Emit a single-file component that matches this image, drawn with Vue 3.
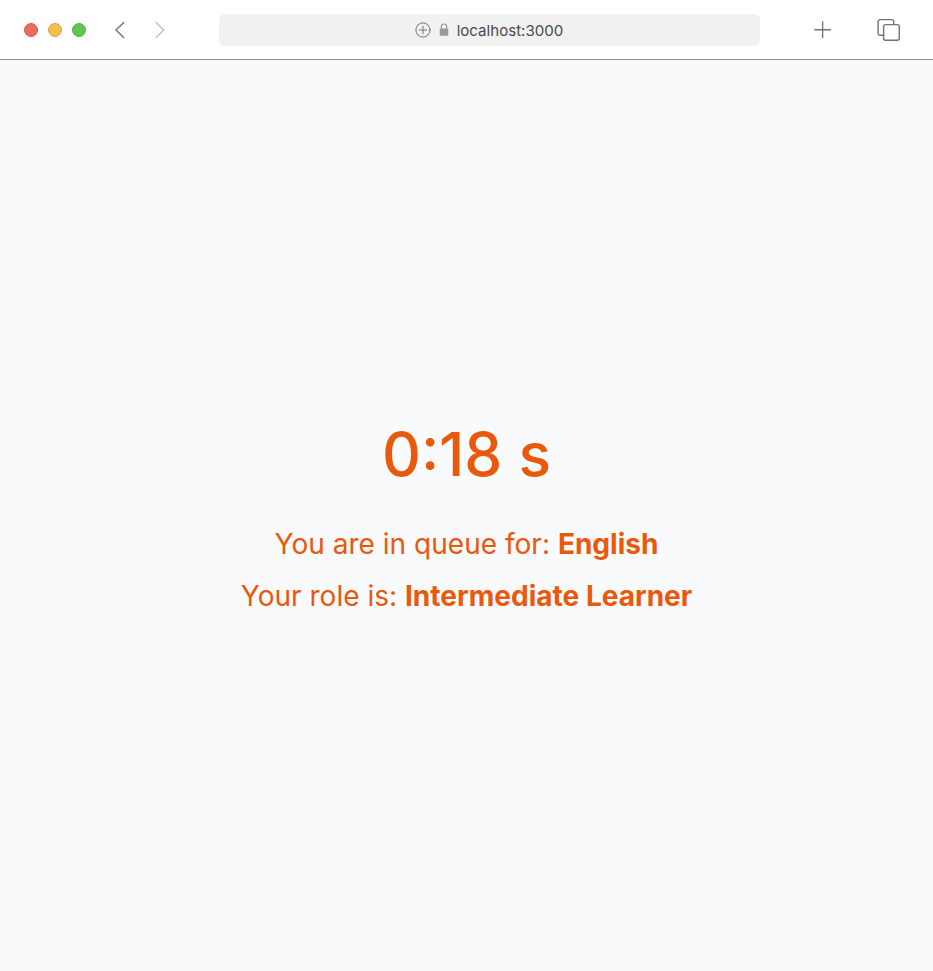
<script setup>
import { ref } from 'vue'

const address = ref('localhost:3000')
const elapsed = ref('0:18 s')
const language = ref('English')
const role = ref('Intermediate Learner')
</script>

<template>
  <div class="window">
    <header class="toolbar">
      <div class="lights">
        <span class="light red"></span>
        <span class="light yellow"></span>
        <span class="light green"></span>
      </div>
      <nav class="history">
        <svg class="chevron" width="12" height="18" viewBox="0 0 12 18"><path d="M9.7 1.4 2 9l7.7 7.6" /></svg>
        <svg class="chevron disabled" width="12" height="18" viewBox="0 0 12 18"><path d="M2 1.4 9.7 9 2 16.6" /></svg>
      </nav>
      <div class="address">
        <svg class="add" width="16" height="16" viewBox="0 0 16 16">
          <circle cx="8" cy="8" r="7.1" />
          <path d="M8 4.3v7.4M4.3 8h7.4" />
        </svg>
        <svg class="lock" width="10" height="13" viewBox="0 0 10 13">
          <path class="shackle" d="M2.4 6V3.6a2.6 2.6 0 0 1 5.2 0V6" />
          <rect x="0.7" y="5.6" width="8.6" height="7.1" rx="1" />
        </svg>
        <span class="url">{{ address }}</span>
      </div>
      <div class="actions">
        <svg width="18" height="18" viewBox="0 0 18 18"><path d="M8.6 1v15.6M.8 8.8h15.6" /></svg>
        <svg width="24" height="24" viewBox="0 0 24 24">
          <path d="M6.6 17.3H3.1a2 2 0 0 1-2-2V3.6a2 2 0 0 1 2-2h11.6a2 2 0 0 1 2 2v3" />
          <rect x="6.6" y="6.6" width="15.7" height="15.6" rx="2" />
        </svg>
      </div>
    </header>
    <main class="page">
      <h1 class="timer">{{ elapsed }}</h1>
      <p class="line">You are in queue for: <strong>{{ language }}</strong></p>
      <p class="line">Your role is: <strong>{{ role }}</strong></p>
    </main>
  </div>
</template>

<style>
body {
  background: #f9fafc;
}
</style>

<style scoped>
.window {
  display: flex;
  flex-direction: column;
  height: 100vh;
  font-family: Inter, "Liberation Sans", sans-serif;
}
.toolbar {
  box-sizing: border-box;
  display: flex;
  align-items: center;
  flex: none;
  height: 60px;
  padding: 0 32px 0 24px;
  background: #fff;
  border-bottom: 1px solid #8f9194;
}
.lights {
  display: flex;
  gap: 10px;
}
.light {
  box-sizing: border-box;
  width: 14px;
  height: 14px;
  border-radius: 50%;
}
.red {
  background: #ed6a5e;
  border: 1px solid #d9594e;
}
.yellow {
  background: #f4be4f;
  border: 1px solid #d9a542;
}
.green {
  background: #61c554;
  border: 1px solid #53ac46;
}
.history {
  display: flex;
  gap: 28px;
  margin-left: 28px;
}
svg {
  display: block;
  flex: none;
  fill: none;
  stroke: #737373;
  stroke-width: 1.4;
  stroke-linecap: round;
}
.disabled {
  stroke: #bfbfbf;
}
.address {
  display: flex;
  align-items: center;
  justify-content: center;
  box-sizing: border-box;
  width: 541px;
  height: 32px;
  margin-left: 53px;
  padding-right: 1px;
  background: #f1f1f1;
  border-radius: 6px;
}
.add {
  stroke-width: 1;
}
.lock {
  margin: 0 8px;
  fill: #999;
  stroke: none;
}
.shackle {
  fill: none;
  stroke: #999;
  stroke-width: 1.2;
}
.url {
  padding-top: 2px;
  color: #4a4a4a;
  font-size: 15.1px;
  line-height: 20px;
}
.actions {
  display: flex;
  align-items: center;
  gap: 45px;
  margin-left: auto;
}
.page {
  display: flex;
  flex: 1;
  flex-direction: column;
  align-items: center;
  justify-content: center;
  padding-top: 2px;
  color: #ea580c;
}
.timer {
  margin: 0 0 34px;
  font-size: 60.4px;
  font-weight: 500;
  line-height: 72px;
}
.line {
  margin: 0 0 12px;
  font-size: 28.05px;
  line-height: 40px;
}
.line:last-child {
  margin-bottom: 0;
}
</style>
